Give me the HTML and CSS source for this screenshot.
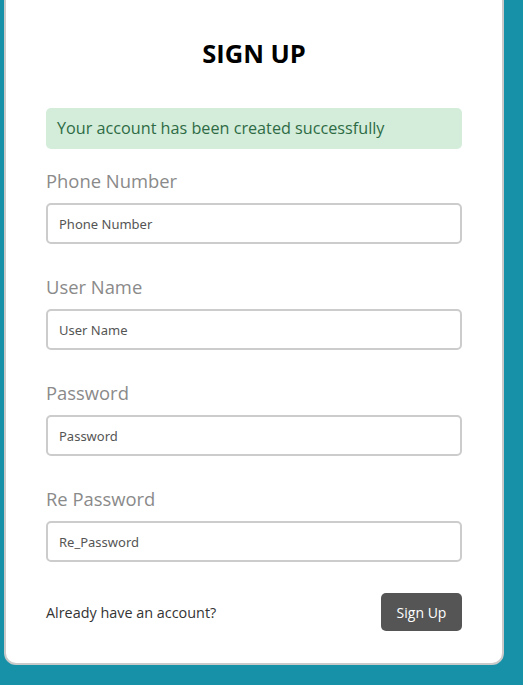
FILE: index.html
```html
<!DOCTYPE html>
<html lang="en">
<head>
<meta charset="utf-8">
<title>Sign Up</title>
<link rel="stylesheet" href="styles.css">
</head>
<body>
<div class="card">
  <h2 class="title">SIGN UP</h2>
  <div class="alert">Your account has been created successfully</div>
  <div class="group">
    <label class="label">Phone Number</label>
    <input class="input" type="text" placeholder="Phone Number">
  </div>
  <div class="group">
    <label class="label">User Name</label>
    <input class="input" type="text" placeholder="User Name">
  </div>
  <div class="group">
    <label class="label">Password</label>
    <input class="input" type="password" placeholder="Password">
  </div>
  <div class="group">
    <label class="label">Re Password</label>
    <input class="input" type="password" placeholder="Re_Password">
  </div>
  <div class="footer">
    <span class="have">Already have an account?</span>
    <button class="btn" type="button">Sign Up</button>
  </div>
</div>
</body>
</html>
```
FILE: styles.css
```css
html, body {
  margin: 0;
  padding: 0;
}
body {
  background: #1791a8;
  font-family: "Open Sans", "Noto Sans", Arial, sans-serif;
  min-height: 685px;
}
.card {
  box-sizing: border-box;
  width: 500px;
  margin: -20px 0 0 4px;
  background: #fff;
  border: 2px solid #cacaca;
  border-radius: 12px;
  padding: 56px 40px 32px 40px;
}
.title {
  margin: 0 0 40px 0;
  text-align: center;
  font-size: 25.5px;
  line-height: 30px;
  font-weight: 700;
  color: #000;
}
.alert {
  background: #d4edda;
  color: #2e6b45;
  border-radius: 5px;
  padding: 10px 11px;
  font-size: 16.2px;
  line-height: 21px;
  margin-bottom: 18px;
}
.group {
  display: flex;
  flex-direction: column;
  margin-bottom: 29px;
}
.group:last-of-type {
  margin-bottom: 0;
}
.label {
  font-size: 18.4px;
  line-height: 28px;
  color: #8a8a8a;
  margin-bottom: 8px;
}
.input {
  box-sizing: border-box;
  height: 41px;
  width: 100%;
  border: 2px solid #cccccc;
  border-radius: 5px;
  padding: 0 11px;
  font-family: "Noto Sans", "Open Sans", sans-serif;
  font-size: 13px;
  color: #333;
  outline: none;
}
.input::placeholder {
  color: #555;
}
.footer {
  display: flex;
  justify-content: space-between;
  align-items: center;
  margin-top: 31px;
}
.have {
  font-size: 14.4px;
  color: #333;
}
.btn {
  height: 38px;
  width: 81px;
  background: #555;
  color: #fff;
  border: none;
  border-radius: 5px;
  font-family: "Open Sans", sans-serif;
  font-size: 14px;
  cursor: pointer;
}
```
